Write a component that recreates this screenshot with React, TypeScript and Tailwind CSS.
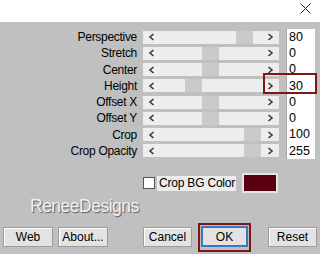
import React from "react";

// slider rows: label, value, thumb offset from track start
const rows = [
  { label: "Perspective", value: "80", thumb: 93 },
  { label: "Stretch", value: "0", thumb: 59 },
  { label: "Center", value: "0", thumb: 59 },
  { label: "Height", value: "30", thumb: 42, marked: true },
  { label: "Offset X", value: "0", thumb: 59 },
  { label: "Offset Y", value: "0", thumb: 59 },
  { label: "Crop", value: "100", thumb: 101 },
  { label: "Crop Opacity", value: "255", thumb: 101 },
];

const Chevron = ({ dir }: { dir: "left" | "right" }) => (
  <svg width="7" height="8" viewBox="0 0 7 8" className="shrink-0">
    <path
      d={dir === "left" ? "M5.5 1 L2 4 L5.5 7" : "M1.5 1 L5 4 L1.5 7"}
      fill="none"
      stroke="#3a3a3a"
      strokeWidth="1.6"
    />
  </svg>
);

const Slider = ({ thumb }: { thumb: number }) => (
  <div className="relative w-[136px] h-[13px] bg-[#ededed] flex items-center justify-between px-[5px]">
    <Chevron dir="left" />
    <div
      className="absolute top-0 h-[13px] w-[17px] bg-[#cacaca]"
      style={{ left: thumb }}
    />
    <Chevron dir="right" />
  </div>
);

const Btn = ({ children, className = "" }: { children: React.ReactNode; className?: string }) => (
  <div
    className={`h-[20px] flex items-center justify-center bg-[#e3e3e3] border border-[#9c9c9c] shadow-[inset_1px_1px_0_#ffffff] text-[12px] text-black ${className}`}
  >
    {children}
  </div>
);

export default function App() {
  return (
    <div
      className="w-[320px] h-[254px] bg-[#c0c0c0] overflow-hidden flex flex-col"
      style={{ fontFamily: '"Liberation Sans", Arial, sans-serif' }}
    >
      {/* title bar */}
      <div className="h-[22px] bg-white flex justify-end pr-[9px] pt-[3px] shrink-0">
        <svg width="11" height="11" viewBox="0 0 11 11">
          <path d="M0.5 0.5 L10.5 10.5 M10.5 0.5 L0.5 10.5" stroke="#222" strokeWidth="1" />
        </svg>
      </div>

      {/* sliders */}
      <div className="mt-[7px] flex flex-col">
        {rows.map((r) => (
          <div key={r.label} className="relative h-[16.25px] flex items-center">
            <div className="w-[137px] text-right text-[12px] leading-none text-black tracking-[-0.3px]">
              {r.label}
            </div>
            <div className="ml-[6px]">
              <Slider thumb={r.thumb} />
            </div>
            <div className="ml-[7px] w-[29px] h-[16.25px] bg-white border-l border-[#a8a8a8] flex items-center pl-[2px] text-[12.5px] leading-none text-black">
              {r.value}
            </div>
            {r.marked && (
              <div className="absolute left-[263px] top-[-5px] w-[54px] h-[21px] border-2 border-[#7d1616]" />
            )}
          </div>
        ))}
      </div>

      {/* crop bg color */}
      <div className="mt-[14px] flex items-center h-[20px] pl-[143px]">
        <div className="w-[12px] h-[12px] bg-white border border-[#555]" />
        <div className="ml-[2px] w-[79px] h-[15px] bg-[#ececec] flex items-center pl-[2px] text-[12px] text-black leading-none tracking-[-0.2px]">
          Crop BG Color
        </div>
        <div className="ml-[6px] w-[36px] h-[20px] border-2 border-[#e6e6e6] bg-[#5a0011]" />
      </div>

      {/* watermark */}
      <div className="pl-[30px] mt-[3px] h-[20px] text-[17.5px] leading-[20px] text-[#f2f2f2] tracking-[-0.5px] [text-shadow:1px_1px_1px_#5a5a5a]">
        ReneeDesigns
      </div>

      {/* buttons */}
      <div className="mt-[10px] flex items-center pl-[3px]">
        <Btn className="w-[50px]">Web</Btn>
        <Btn className="w-[50px] ml-[5px]">About...</Btn>
        <Btn className="w-[49px] ml-[35px]">Cancel</Btn>
        <div className="relative ml-[9px]">
          <div className="absolute left-[-3px] top-[-3px] w-[53px] h-[29px] border-2 border-[#7d1616]" />
          <div className="w-[47px] h-[21px] border-2 border-[#3579c0] bg-[#e3e3e3] flex items-center justify-center text-[12px] text-black">
            OK
          </div>
        </div>
        <Btn className="w-[49px] ml-[20px]">Reset</Btn>
      </div>
    </div>
  );
}
